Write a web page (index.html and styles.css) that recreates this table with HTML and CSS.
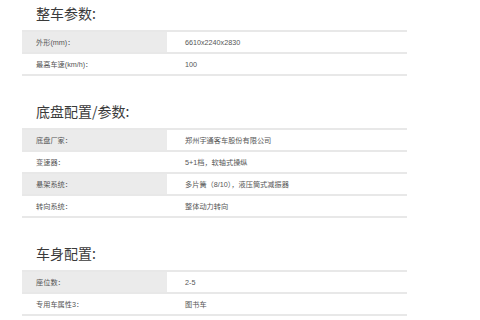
FILE: index.html
```html
<!DOCTYPE html>
<html lang="zh-CN">
<head>
    <meta charset="UTF-8">
    <meta name="viewport" content="width=device-width, initial-scale=1.0">
    <title>车辆参数</title>
    <link rel="stylesheet" href="styles.css">
</head>
<body>
    <div class="params">
        <div class="section">
            <h3>整车参数:</h3>
            <table class="spec">
                <tr><td class="label">外形(mm)：</td><td>6610x2240x2830</td></tr>
                <tr><td class="label">最高车速(km/h)：</td><td>100</td></tr>
            </table>
        </div>
        <div class="section">
            <h3>底盘配置/参数:</h3>
            <table class="spec">
                <tr><td class="label">底盘厂家：</td><td>郑州宇通客车股份有限公司</td></tr>
                <tr><td class="label">变速器：</td><td>5+1档，软轴式操纵</td></tr>
                <tr><td class="label">悬架系统：</td><td>多片簧（8/10），液压筒式减振器</td></tr>
                <tr><td class="label">转向系统：</td><td>整体动力转向</td></tr>
            </table>
        </div>
        <div class="section">
            <h3>车身配置:</h3>
            <table class="spec">
                <tr><td class="label">座位数：</td><td>2-5</td></tr>
                <tr><td class="label">专用车属性3：</td><td>图书车</td></tr>
            </table>
        </div>
    </div>
</body>
</html>
```

FILE: styles.css
```css
body {
    margin: 0;
    padding: 0;
    background: #fff;
    font-family: "Liberation Sans", "Noto Sans CJK SC", sans-serif;
    color: #555;
}
.params {
    width: 385px;
    padding: 3px 0 0 22px;
}
.section {
    margin-bottom: 25px;
}
.section h3 {
    margin: 0 0 7px 14px;
    font-family: "Noto Sans CJK SC", sans-serif;
    font-size: 14px;
    font-weight: normal;
    line-height: 20px;
    color: #3a3a3a;
}
.spec {
    width: 100%;
    border-collapse: collapse;
    border-top: 2px solid #e8e8e8;
}
.spec td {
    height: 20px;
    padding: 0 0 0 18px;
    font-size: 7.2px;
    border-bottom: 2px solid #e8e8e8;
}
.spec td.label {
    width: 131px;
    padding-left: 14px;
}
.spec tr:nth-child(odd) td.label {
    background: #ebebeb;
}
```
